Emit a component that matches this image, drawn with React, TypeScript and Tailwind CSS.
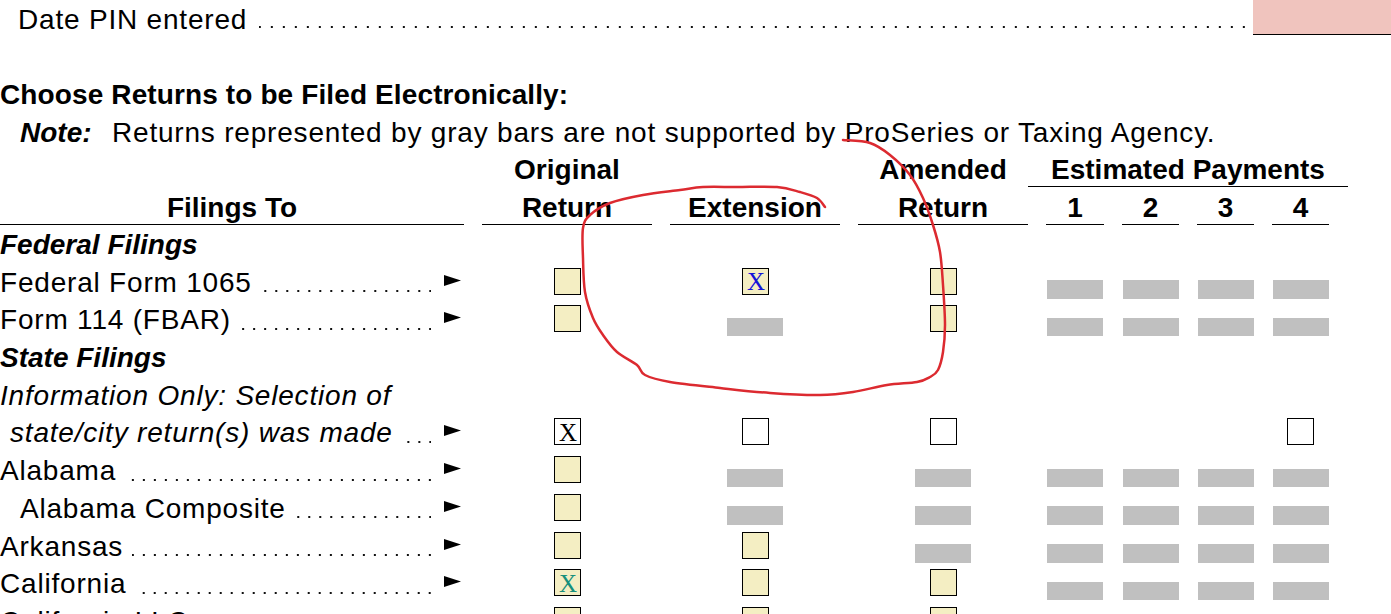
import React from 'react';

const COLS = 'grid grid-cols-[464px_170px_170px_170px_58px_57px_57px_57px] gap-x-[18px]';

type Cell = null | { kind: 'box' | 'white' | 'bar'; mark?: 'blue' | 'black' | 'teal' };

const Y: Cell = { kind: 'box' };
const W: Cell = { kind: 'white' };
const B: Cell = { kind: 'bar' };
const _: Cell = null;

type Row = {
  label: string;
  variant?: 'head' | 'italic';
  indent?: string;
  leader?: boolean;
  cells?: Cell[];
};

const rows: Row[] = [
  { label: 'Federal Filings', variant: 'head' },
  { label: 'Federal Form 1065', leader: true, cells: [Y, { kind: 'box', mark: 'blue' }, Y, B, B, B, B] },
  { label: 'Form 114 (FBAR)', leader: true, cells: [Y, B, Y, B, B, B, B] },
  { label: 'State Filings', variant: 'head' },
  { label: 'Information Only: Selection of', variant: 'italic' },
  {
    label: 'state/city return(s) was made',
    variant: 'italic',
    indent: 'pl-[10px]',
    leader: true,
    cells: [{ kind: 'white', mark: 'black' }, W, W, _, _, _, W],
  },
  { label: 'Alabama', leader: true, cells: [Y, B, B, B, B, B, B] },
  { label: 'Alabama Composite', indent: 'pl-[20px]', leader: true, cells: [Y, B, B, B, B, B, B] },
  { label: 'Arkansas', leader: true, cells: [Y, Y, B, B, B, B, B] },
  { label: 'California', leader: true, cells: [{ kind: 'box', mark: 'teal' }, Y, Y, B, B, B, B] },
  { label: 'California LLC', leader: true, cells: [Y, Y, Y, B, B, B, B] },
];

// hand-drawn red loop around the Extension column
const loop: [number, number][] = [
  [843, 140], [870, 143], [890, 155], [910, 175], [923, 198], [933, 225], [940, 252],
  [943, 285], [945, 325], [943, 352], [938, 370], [930, 377], [917, 382], [887, 385],
  [853, 392], [820, 395], [770, 393], [720, 388], [670, 382], [645, 375], [637, 365],
  [617, 352], [603, 335], [593, 318], [585, 292], [583, 258], [583, 228], [590, 215],
  [610, 203], [643, 195], [680, 190], [703, 187], [737, 187], [777, 187], [800, 192],
  [817, 198], [825, 207],
];

function smoothPath(pts: [number, number][]) {
  let d = `M${pts[0][0]},${pts[0][1]}`;
  for (let i = 0; i < pts.length - 1; i++) {
    const p0 = pts[i - 1] || pts[i];
    const p1 = pts[i];
    const p2 = pts[i + 1];
    const p3 = pts[i + 2] || p2;
    const c1x = p1[0] + (p2[0] - p0[0]) / 6;
    const c1y = p1[1] + (p2[1] - p0[1]) / 6;
    const c2x = p2[0] - (p3[0] - p1[0]) / 6;
    const c2y = p2[1] - (p3[1] - p1[1]) / 6;
    d += ` C${c1x},${c1y} ${c2x},${c2y} ${p2[0]},${p2[1]}`;
  }
  return d;
}

// dot leader drawn as a repeating background, anchored right so the dots line up row to row
function Leader({ className }: { className: string }) {
  return (
    <span
      className={`flex-1 min-w-0 h-[2px] bg-right bg-repeat-x bg-[linear-gradient(90deg,transparent_9px,#111_9px)] bg-[length:11px_2px] ${className}`}
    />
  );
}

function Arrow() {
  return (
    <svg className="shrink-0 mt-[11px] ml-[13px] mr-[3px]" width="17" height="11" viewBox="0 0 17 11">
      <polygon points="0,0 17,5.5 0,11" fill="#000" />
    </svg>
  );
}

function Mark({ color }: { color: 'blue' | 'black' | 'teal' }) {
  const tone = color === 'blue' ? 'text-[#1414d8]' : color === 'teal' ? 'text-[#17907c]' : 'text-black';
  return (
    <span className={`font-['Liberation_Serif',serif] text-[25px] leading-none tracking-normal pl-[2px] mt-[1px] ${tone}`}>X</span>
  );
}

function CellView({ cell }: { cell: Cell }) {
  if (!cell) return <div />;
  if (cell.kind === 'bar') {
    return (
      <div className="flex justify-center">
        <div className="mt-[16.5px] w-[56px] h-[18.5px] bg-[#c0c0c0]" />
      </div>
    );
  }
  const fill = cell.kind === 'white' ? 'bg-white' : 'bg-[#f4eec3]';
  return (
    <div className="flex justify-center">
      <div className={`mt-[4px] w-[27px] h-[27px] border-[1.5px] border-black flex items-center justify-center ${fill}`}>
        {cell.mark && <Mark color={cell.mark} />}
      </div>
    </div>
  );
}

export default function App() {
  return (
    <div className="relative w-[1391px] h-[614px] overflow-hidden bg-white text-black font-['Liberation_Sans',Arial,sans-serif] text-[28px] tracking-[0.8px]">
      {/* PIN date */}
      <div className="flex items-start h-[35px]">
        <span className="mt-[4px] pl-[18px] leading-[32px] whitespace-nowrap">Date PIN entered</span>
        <span className="flex-1 min-w-0 h-[2px] mt-[26px] ml-[12px] mr-[8px] bg-right bg-repeat-x bg-[linear-gradient(90deg,transparent_10px,#111_10px)] bg-[length:12px_2px]" />
        <div className="w-[138px] h-[35px] shrink-0 bg-[#f0c4be] border-b border-black" />
      </div>

      {/* Title + note */}
      <h2 className="mt-[44px] leading-[32px] font-bold tracking-[0.12px] whitespace-nowrap">
        Choose Returns to be Filed Electronically:
      </h2>
      <p className="mt-[6px] leading-[32px] whitespace-nowrap flex">
        <span className="pl-[20px] w-[112px] shrink-0 font-bold italic tracking-normal">Note:</span>
        <span>Returns represented by gray bars are not supported by ProSeries or Taxing Agency.</span>
      </p>

      {/* Column headers */}
      <div className={`${COLS} mt-[5px] font-bold text-center tracking-normal leading-[32px]`}>
        <div />
        <div>Original</div>
        <div />
        <div>Amended</div>
        <div className="col-span-4 -ml-[18px] -mr-[19px] border-b border-black">Estimated Payments</div>

        <div className="pt-[5px] border-b border-black">Filings To</div>
        <div className="pt-[5px] border-b border-black">Return</div>
        <div className="pt-[5px] border-b border-black">Extension</div>
        <div className="pt-[5px] border-b border-black">Return</div>
        <div className="pt-[5px] border-b border-black">1</div>
        <div className="pt-[5px] border-b border-black">2</div>
        <div className="pt-[5px] border-b border-black">3</div>
        <div className="pt-[5px] border-b border-black">4</div>
      </div>

      {/* Filing rows */}
      <div className="flex flex-col pt-[1px]">
        {rows.map((row) => (
          <div key={row.label} className={`${COLS} h-[37.7px] shrink-0`}>
            <div className="flex items-start leading-[37.7px] min-w-0">
              <span
                className={`whitespace-nowrap ${row.indent ?? ''} ${
                  row.variant === 'head'
                    ? 'font-bold italic tracking-normal'
                    : row.variant === 'italic'
                    ? 'italic'
                    : ''
                }`}
              >
                {row.label}
              </span>
              {row.leader && (
                <>
                  <Leader className="mt-[26.5px] ml-[9px]" />
                  <Arrow />
                </>
              )}
            </div>
            {(row.cells ?? [_, _, _, _, _, _, _]).map((c, i) => (
              <CellView key={i} cell={c} />
            ))}
          </div>
        ))}
      </div>

      {/* red pen annotation */}
      <svg className="absolute inset-0 pointer-events-none" width="1391" height="614" viewBox="0 0 1391 614">
        <path d={smoothPath(loop)} fill="none" stroke="#dc2a30" strokeWidth="2.5" strokeLinecap="round" strokeLinejoin="round" />
      </svg>
    </div>
  );
}
